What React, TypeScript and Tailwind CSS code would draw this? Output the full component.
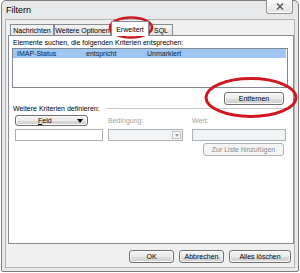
import React from "react";

const btnBase =
  "border border-[#707070] rounded-[3px] bg-[linear-gradient(#f2f2f2_0%,#ebebeb_50%,#dddddd_51%,#cfcfcf_100%)] shadow-[inset_0_0_0_1px_#fbfbfb] flex items-center leading-none text-black";
const btn = `${btnBase} h-[13px] justify-center`;

const tabs = [
  { label: "Nachrichten", w: "w-[44px]" },
  { label: "Weitere Optionen", w: "w-[57px]" },
  { label: "Erweitert", w: "w-[38px]", active: true },
  { label: "SQL", w: "w-[24px]" },
];

export default function App() {
  return (
    <div className="relative w-[300px] h-[273px] bg-white text-[7px] leading-[9px] text-black font-['Liberation_Sans',Arial,sans-serif]">
      {/* Window */}
      <div className="ml-px w-[298px] h-[272px] border border-[#7d7d7d] rounded-t-[5px] rounded-b-[2px] bg-[#e7e8ea] flex flex-col px-[3px] pb-[3px]">
        {/* Title bar */}
        <div className="h-[18px] flex justify-between items-start">
          <span className="text-[9px] leading-[10px] pt-[4px] pl-[1px]">Filtern</span>
          <div className="-mt-px mr-[2px] w-[27px] h-[14px] border border-[#8e8e8e] border-t-0 rounded-b-[3px] bg-[linear-gradient(#fafafa,#e2e2e2)] shadow-[inset_0_0_0_1px_#ffffff] flex items-center justify-center">
            <svg width="8" height="7" viewBox="0 0 8 7">
              <path d="M1 0.5 L7 6.5 M7 0.5 L1 6.5" stroke="#555" strokeWidth="1.4" fill="none" />
            </svg>
          </div>
        </div>

        {/* Client area */}
        <div className="flex-1 border border-[#b4b4b4] bg-[#f0f0f0] flex flex-col pl-[2px]">
          {/* Tabs */}
          <div className="h-[15px] flex items-end pl-[2px]">
            {tabs.map((t) =>
              t.active ? (
                <div
                  key={t.label}
                  className={`${t.w} relative z-10 h-[15px] -mb-px border border-b-0 border-[#898c95] bg-white flex justify-center pt-[3px] whitespace-nowrap`}
                >
                  {t.label}
                </div>
              ) : (
                <div
                  key={t.label}
                  className={`${t.w} h-[11px] border border-b-0 border-[#898c95] bg-[linear-gradient(#f3f3f3,#e3e3e3)] flex justify-center pt-[1px] whitespace-nowrap overflow-hidden`}
                >
                  {t.label}
                </div>
              )
            )}
          </div>

          {/* Tab panel */}
          <div className="h-[209px] border border-[#898c95] bg-white flex flex-col">
            <div className="mt-[2px] pl-[4px] h-[9px]">
              Elemente suchen, die folgenden Kriterien entsprechen:
            </div>
            <div className="ml-[3px] mt-px w-[276px] h-[40px] border border-[#828790]">
              <div className="h-[9px] mr-px flex items-center bg-[#9fc6f0] pl-[4px] text-[#0b1d3f]">
                <span className="w-[69px]">IMAP-Status</span>
                <span className="w-[61px]">entspricht</span>
                <span>Unmarkiert</span>
              </div>
            </div>
            <div className="flex justify-end pr-[9px] mt-[4px]">
              <div className={`${btn} w-[60px]`}>Entfernen</div>
            </div>
            <div className="-mt-px h-[9px] flex items-center pl-[4px] pr-[5px]">
              <span className="whitespace-nowrap">Weitere Kriterien definieren:</span>
              <div className="flex-1 h-px ml-[6px] bg-[#c9c9c9]" />
            </div>

            <div className="mt-[2px] h-[11px] pl-[6px] grid grid-cols-[93px_84px_94px] items-center">
              <div className={`${btnBase} h-[11px] w-[73px] justify-between pl-[22px] pr-[4px]`}>
                <span>
                  <span className="underline">F</span>eld
                </span>
                <svg width="6" height="4" viewBox="0 0 6 4">
                  <path d="M0 0 L6 0 L3 4 Z" fill="#000" />
                </svg>
              </div>
              <span className="text-[#a3a3a3]">Bedingung:</span>
              <span className="text-[#a3a3a3]">Wert:</span>
            </div>

            <div className="mt-[3px] h-[12px] pl-[6px] grid grid-cols-[93px_84px_94px]">
              <div className="w-[88px] h-[12px] border border-[#abadb3] bg-white" />
              <div className="w-[75px] h-[12px] border border-[#adb2b5] bg-[#f2f3f5] flex justify-end items-center pr-px">
                <div className="w-[9px] h-[8px] border border-[#c3c5c8] bg-[#f4f4f4] flex items-center justify-center">
                  <svg width="4" height="3" viewBox="0 0 4 3">
                    <path d="M0 0 L4 0 L2 3 Z" fill="#a0a0a0" />
                  </svg>
                </div>
              </div>
              <div className="w-[94px] h-[12px] border border-[#adb2b5] bg-[#f2f3f5]" />
            </div>

            <div className="flex justify-end pr-[9px] mt-[2px]">
              <div className="w-[81px] h-[13px] border border-[#adb2b5] rounded-[3px] bg-[#f4f4f4] flex items-center justify-center leading-none text-[#8a8a8a]">
                Zur Liste hinzufügen
              </div>
            </div>
          </div>

          {/* Dialog buttons */}
          <div className="mt-[6px] flex justify-end gap-[5px] pr-[3px]">
            <div className={`${btn} w-[45px]`}>OK</div>
            <div className={`${btn} w-[45px]`}>Abbrechen</div>
            <div className={`${btn} w-[62px]`}>Alles löschen</div>
          </div>
        </div>
      </div>

      {/* Red highlight marks */}
      <svg className="absolute inset-0 pointer-events-none" width="300" height="273" viewBox="0 0 300 273">
        <ellipse cx="131" cy="27.5" rx="21" ry="10" fill="none" stroke="#cf1720" strokeWidth="2.6" />
        <ellipse cx="251" cy="97.5" rx="45" ry="19" fill="none" stroke="#cf1720" strokeWidth="3" />
      </svg>
    </div>
  );
}
